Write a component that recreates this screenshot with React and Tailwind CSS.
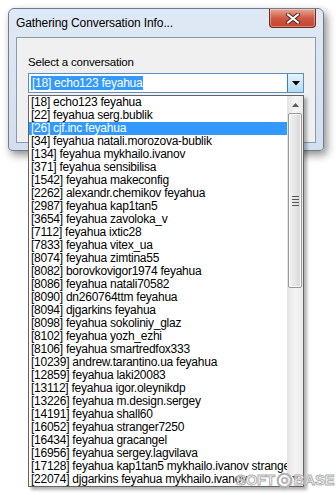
const items = [
  '[18] echo123 feyahua',
  '[22] feyahua serg.bublik',
  '[26] cjf.inc feyahua',
  '[34] feyahua natali.morozova-bublik',
  '[134] feyahua mykhailo.ivanov',
  '[371] feyahua sensibilisa',
  '[1542] feyahua makeconfig',
  '[2262] alexandr.chemikov feyahua',
  '[2987] feyahua kap1tan5',
  '[3654] feyahua zavoloka_v',
  '[7112] feyahua ixtic28',
  '[7833] feyahua vitex_ua',
  '[8074] feyahua zimtina55',
  '[8082] borovkovigor1974 feyahua',
  '[8086] feyahua natali70582',
  '[8090] dn260764ttm feyahua',
  '[8094] djgarkins feyahua',
  '[8098] feyahua sokoliniy_glaz',
  '[8102] feyahua yozh_ezhi',
  '[8106] feyahua smartredfox333',
  '[10239] andrew.tarantino.ua feyahua',
  '[12859] feyahua laki20083',
  '[13112] feyahua igor.oleynikdp',
  '[13226] feyahua m.design.sergey',
  '[14191] feyahua shall60',
  '[16052] feyahua stranger7250',
  '[16434] feyahua gracangel',
  '[16956] feyahua sergey.lagvilava',
  '[17128] feyahua kap1tan5 mykhailo.ivanov stranger7250',
  '[22074] djgarkins feyahua mykhailo.ivanov',
];

const SELECTED = 2;

const CloseButton = () => (
  <div className="w-[47px] h-[19px] rounded-b-[4px] border border-t-0 border-[#6b2a22] bg-gradient-to-b from-[#e8a593] via-[#cf5a45] to-[#c4432f] flex items-center justify-center shadow-[inset_0_0_0_1px_rgba(255,255,255,0.35)]">
    <svg width="14" height="11" viewBox="0 0 14 11">
      <path d="M2 1.5 L12 9.5 M12 1.5 L2 9.5" stroke="#4a2520" strokeWidth="4" strokeLinecap="round" />
      <path d="M2 1.5 L12 9.5 M12 1.5 L2 9.5" stroke="#ffffff" strokeWidth="2.2" strokeLinecap="round" />
    </svg>
  </div>
);

const DownTriangle = () => (
  <svg width="8" height="5" viewBox="0 0 8 5">
    <path d="M0 0 H8 L4 4.5 Z" fill="#000" />
  </svg>
);

const Scrollbar = () => (
  <div className="w-[16px] h-full flex flex-col bg-gradient-to-r from-[#e3e3e3] via-[#f4f4f4] to-[#ececec]">
    <div className="h-[17px] flex items-center justify-center">
      <svg width="7" height="4" viewBox="0 0 7 4">
        <path d="M0 4 H7 L3.5 0 Z" fill="#5a5a5a" />
      </svg>
    </div>
    <div className="h-[175px] mx-[1px] rounded-[2px] border border-[#979797] bg-gradient-to-r from-[#f2f2f2] via-[#e6e6e6] to-[#d6d6d6] flex flex-col items-center justify-center gap-[2px] shadow-[inset_0_0_0_1px_#fbfbfb]">
      <div className="w-[7px] h-[1px] bg-[#555]" />
      <div className="w-[7px] h-[1px] bg-[#555]" />
      <div className="w-[7px] h-[1px] bg-[#555]" />
      <div className="w-[7px] h-[1px] bg-[#555]" />
    </div>
    <div className="flex-1" />
    <div className="h-[17px] flex items-center justify-center">
      <svg width="7" height="4" viewBox="0 0 7 4">
        <path d="M0 0 H7 L3.5 4 Z" fill="#5a5a5a" />
      </svg>
    </div>
  </div>
);

export default function App() {
  return (
    <div className="relative w-[336px] h-[495px] bg-white overflow-hidden font-['Liberation_Sans',Arial,sans-serif] text-black">
      {/* window */}
      <div className="ml-[8px] mt-[8px] w-[316px] h-[143px] rounded-t-[6px] rounded-b-[4px] border border-[#707d8c] bg-gradient-to-b from-[#dfe9f5] to-[#d3dfee] shadow-[3px_4px_9px_rgba(0,0,0,0.45)] px-[7px] flex flex-col">
        <div className="h-[28px] flex items-start justify-between">
          <span className="pt-[7px] text-[12px] leading-[15px] tracking-[-0.1px] text-black">Gathering Conversation Info...</span>
          <CloseButton />
        </div>
        <div className="flex-1 mb-[7px] border border-[#8d9aab] bg-[#f0f0f0] px-[11px] pt-[17px]">
          <div className="text-[11.5px] leading-[14px] tracking-[-0.2px]">Select a conversation</div>
          <div className="mt-[4px] h-[20px] border border-[#5b8fc0] bg-white flex">
            <div className="flex-1 flex items-center pl-[2px]">
              <span className="bg-[#3399ff] text-white text-[12px] leading-[14px] px-[1px] tracking-[-0.25px]">[18] echo123 feyahua</span>
            </div>
            <div className="w-[16px] border-l border-[#3c7fb1] bg-gradient-to-b from-[#e6f4fc] to-[#b5dcf2] flex items-center justify-center">
              <DownTriangle />
            </div>
          </div>
        </div>
      </div>

      {/* dropdown list */}
      <div className="absolute left-[28px] top-[95px] w-[276px] h-[392px] border border-[#646464] bg-white shadow-[3px_3px_3px_rgba(0,0,0,0.3)] flex">
        <div className="flex-1 flex flex-col overflow-hidden">
          {items.map((t, i) => (
            <div
              key={t}
              className={
                i === SELECTED
                  ? 'h-[13px] shrink-0 pl-[2px] bg-[#3399ff] text-white text-[12px] leading-[13px] tracking-[-0.25px] whitespace-nowrap'
                  : 'h-[13px] shrink-0 pl-[2px] text-[12px] leading-[13px] tracking-[-0.25px] whitespace-nowrap'
              }
            >
              {t}
            </div>
          ))}
        </div>
        <Scrollbar />
      </div>

      {/* watermark */}
      <div className="absolute left-[236px] top-[471px] flex items-center gap-[1px] text-[15px] font-bold leading-[18px] text-white/70 [-webkit-text-stroke:1px_#b0b0b0] tracking-[-0.3px]">
        <span>SOFT</span>
        <svg width="17" height="17" viewBox="0 0 20 20">
          <circle cx="10" cy="10" r="8" fill="none" stroke="#b0b0b0" strokeWidth="2.5" />
          <circle cx="10" cy="10" r="3" fill="none" stroke="#b0b0b0" strokeWidth="2" />
        </svg>
        <span>BASE</span>
      </div>
    </div>
  );
}
